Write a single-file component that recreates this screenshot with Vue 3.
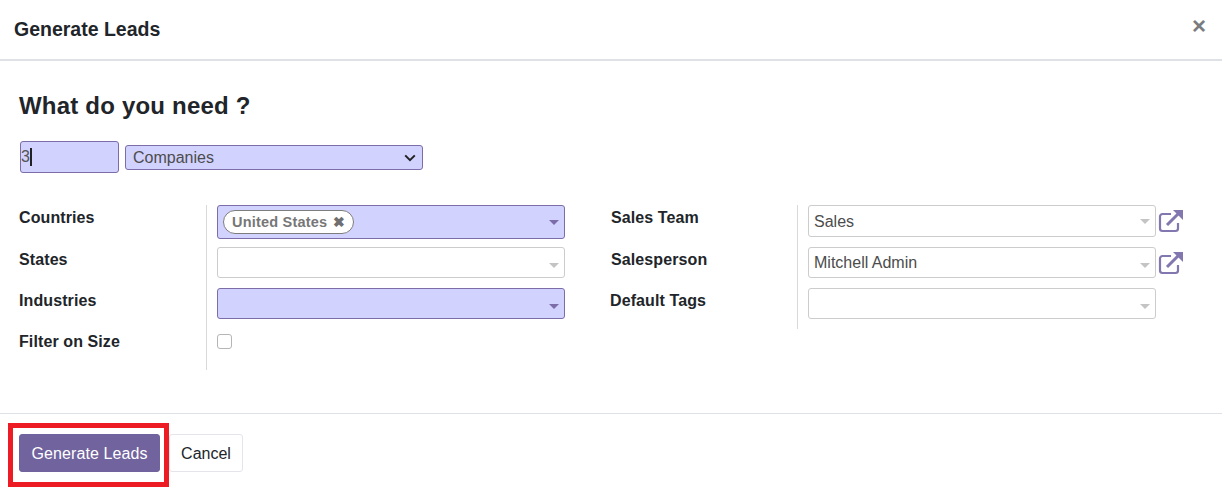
<script setup>
const leftRows = [
  { label: 'Countries', kind: 'tag', accent: true },
  { label: 'States', kind: 'empty' },
  { label: 'Industries', kind: 'empty', accent: true },
  { label: 'Filter on Size', kind: 'check' }
]
const rightRows = [
  { label: 'Sales Team', value: 'Sales', link: true },
  { label: 'Salesperson', value: 'Mitchell Admin', link: true },
  { label: 'Default Tags', value: '' }
]
</script>

<template>
  <div class="dialog">
    <header class="head">
      <h4 class="title">Generate Leads</h4>
      <span class="close">×</span>
    </header>
    <main class="body">
      <h1 class="need">What do you need ?</h1>
      <div class="count-row">
        <div class="count">3<i class="caret"></i></div>
        <div class="kind">
          <span>Companies</span>
          <svg width="12" height="8" viewBox="0 0 12 8"><path d="M1.2 1.4 6 6.2l4.8-4.8" fill="none" stroke="#222" stroke-width="2"/></svg>
        </div>
      </div>
      <div class="groups">
        <div class="group left">
          <div class="labels">
            <div v-for="r in leftRows" :key="r.label" class="lab">{{ r.label }}</div>
          </div>
          <div class="fields">
            <div v-for="r in leftRows" :key="r.label" class="cell">
              <span v-if="r.kind === 'check'" class="check"></span>
              <div v-else class="field" :class="{ accent: r.accent, tall: r.kind === 'tag' }">
                <span v-if="r.kind === 'tag'" class="tag">United States <b class="tagx">✖</b></span>
                <i class="arrow"></i>
              </div>
            </div>
          </div>
        </div>
        <div class="group right">
          <div class="labels">
            <div v-for="r in rightRows" :key="r.label" class="lab" :class="{ nudge: r.label === 'Default Tags' }">{{ r.label }}</div>
          </div>
          <div class="fields">
            <div v-for="r in rightRows" :key="r.label" class="cell">
              <div class="field">
                <span class="val">{{ r.value }}</span>
                <i class="arrow"></i>
              </div>
              <svg v-if="r.link" class="ext" width="26" height="24" viewBox="0 0 26 24">
                <path d="M13 5H4.5A2.5 2.5 0 0 0 2 7.500v12A2.500 2.500 0 0 0 4.500 22h13a2.500 2.500 0 0 0 2.500-2.500V14" fill="none" stroke="#8277ae" stroke-width="2.200"/>
                <path d="M9 16 20 5" fill="none" stroke="#8277ae" stroke-width="3"/>
                <path d="M15 1h10v10z" fill="#8277ae"/>
              </svg>
            </div>
          </div>
        </div>
      </div>
    </main>
    <footer class="foot">
      <div class="mark">
        <button class="btn primary"><span>Generate Leads</span></button>
      </div>
      <button class="btn plain"><span>Cancel</span></button>
    </footer>
  </div>
</template>

<style>
html, body { margin: 0; background: #fff; }
</style>

<style scoped>
.dialog {
  width: 1222px;
  height: 493px;
  overflow: hidden;
  font-family: "Liberation Sans", Arial, sans-serif;
  color: #212529;
  background: #fff;
  display: flex;
  flex-direction: column;
}
.head {
  height: 59px;
  flex: none;
  border-bottom: 2px solid #dee2e6;
  display: flex;
  align-items: center;
  justify-content: space-between;
  padding: 0 16px 0 14px;
}
.title { margin: 0; font-size: 19.500px; font-weight: 700; }
.close { font-size: 24px; font-weight: 700; color: #7a7c80; line-height: 1; margin-top: -8px; }
.body { flex: none; height: 352px; padding: 0 0 0 19px; box-sizing: border-box; }
.need { margin: 31px 0 0; font-size: 24px; line-height: 28px; font-weight: 700; letter-spacing: 0.2px; }
.count-row { display: flex; align-items: center; gap: 6px; margin: 21px 0 0 1px; }
.count {
  width: 99px; height: 32px; box-sizing: border-box;
  background: #d2d2ff; border: 1px solid #7c6ca8; border-radius: 3px;
  font-size: 16px; color: #555;
  display: flex; align-items: center;
}
.caret { width: 2px; height: 18px; background: #222; }
.kind {
  width: 298px; height: 25px; box-sizing: border-box;
  background: #d2d2ff; border: 1px solid #7c6ca8; border-radius: 3px;
  font-size: 16px; color: #4c4c4c; padding: 1px 6px 0 7px;
  display: flex; align-items: center; justify-content: space-between;
}
.groups { display: flex; margin-top: 32px; }
.group { display: flex; }
.left { width: 592px; }
.labels { display: flex; flex-direction: column; }
.left .labels { width: 187px; }
.right .labels { width: 186px; }
.lab {
  height: 41px; font-size: 16px; font-weight: 700; letter-spacing: 0.1px;
  line-height: 26px; color: #212529;
}
.lab:first-child { height: 42px; }
.lab.nudge { margin-left: -1px; }
.fields {
  border-left: 1px solid #d9d9d9;
  padding-left: 10px;
  display: flex; flex-direction: column;
}
.left .fields { height: 165px; }
.right .fields { height: 124px; }
.cell { height: 41px; display: flex; align-items: flex-start; flex: none; }
.cell:first-child { height: 42px; }
.field {
  width: 348px; height: 31px; box-sizing: border-box; position: relative;
  border: 1px solid #ccc; border-radius: 3px; background: #fff;
  display: flex; align-items: center; font-size: 16px; color: #4c4c4c;
}
.right .cell:first-child .field { height: 32px; }
.field.tall { height: 34px; }
.field.accent { background: #d2d2ff; border-color: #7c6ca8; }
.val { padding-left: 5px; padding-top: 1px; }
.cell + .cell .val { padding-top: 0; }
.arrow {
  position: absolute; right: 5px; top: 50%; margin-top: 0;
  border-top: 5px solid #c4c4c4; border-left: 5px solid transparent; border-right: 5px solid transparent;
}
.cell:first-child .arrow { margin-top: -2px; }
.accent .arrow { border-top-color: #7c6ca8; }
.tag {
  margin-left: 5px; height: 24px; box-sizing: border-box; padding: 0 8px;
  border: 1px solid #7d7d7d; border-radius: 12px; background: #fff;
  display: flex; align-items: center; gap: 1px;
  font-size: 14.500px; font-weight: 700; color: #777; letter-spacing: 0.2px; white-space: pre;
}
.tagx { font-size: 14px; color: #6f6f6f; }
.check {
  width: 15px; height: 15px; box-sizing: border-box; margin-top: 5px;
  border: 1px solid #b5b5b5; border-radius: 3px; background: #fff;
}
.ext { margin: 4px 0 0 2px; flex: none; }
.foot {
  flex: none;
  border-top: 1px solid #dee2e6;
  padding: 9px 0 0 8px;
  display: flex; align-items: flex-start;
}
.mark {
  border: 5px solid #ed1c24;
  width: 161px; height: 64px; box-sizing: border-box;
  padding: 6px 0 0 6px;
}
.btn {
  font-family: inherit; font-size: 16px; height: 38px; border-radius: 3px; box-sizing: border-box; cursor: pointer;
  padding: 1px 0 0;
}
.primary { width: 141px; background: #71639e; border: 1px solid #71639e; color: #fff; letter-spacing: 0.1px; }
.plain { width: 74px; margin-top: 11px; background: #fff; border: 1px solid #e4e4ea; color: #212529; }
</style>
